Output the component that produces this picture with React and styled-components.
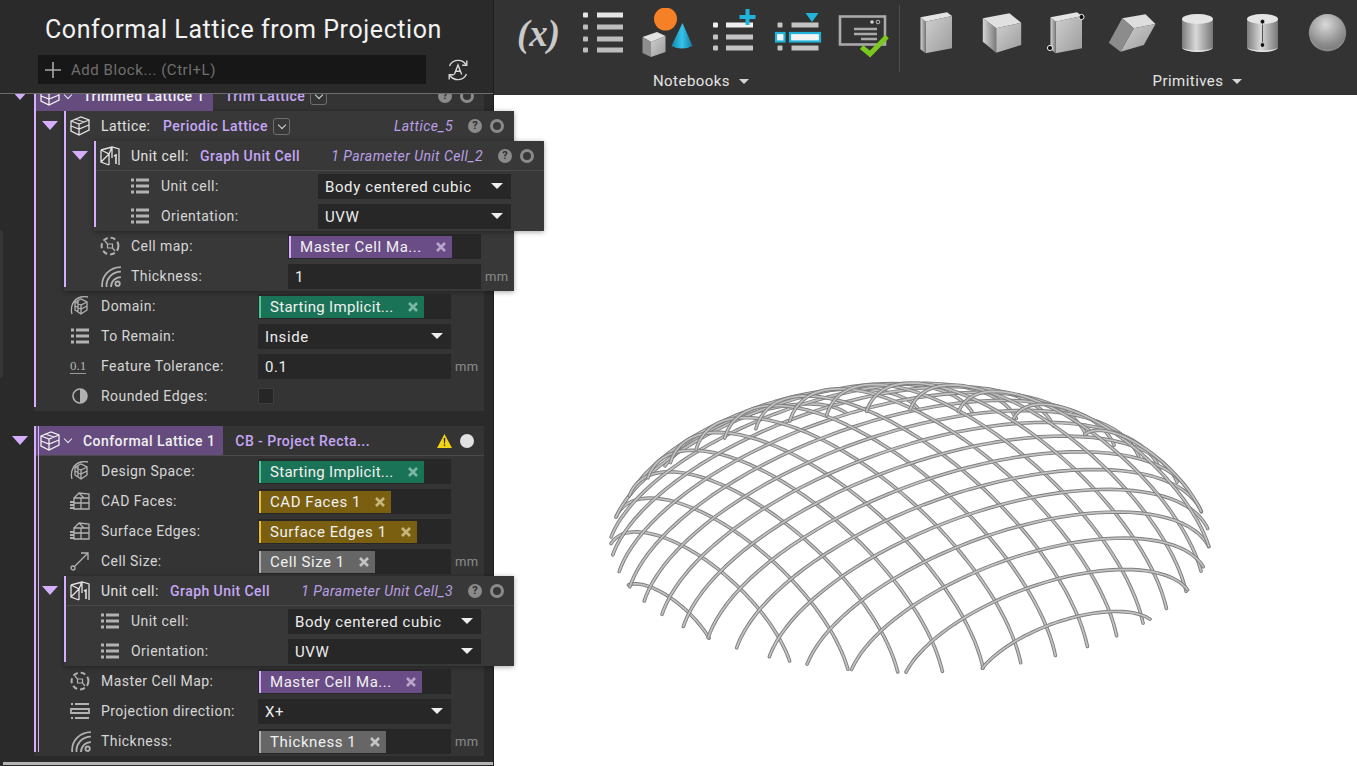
import React from "react";
import styled, { createGlobalStyle } from "styled-components";

const GlobalStyle = createGlobalStyle`
  html, body {
    margin: 0;
    height: 100%;
    overflow: hidden;
    background: #fff;
    font-family: Roboto, "Liberation Sans", sans-serif;
  }
`;

const Page = styled.div`
  display: flex;
  width: 1357px;
  height: 766px;
  overflow: hidden;
  letter-spacing: 0.45px;
`;

const Sidebar = styled.aside`
  position: relative;
  z-index: 2;
  flex: 0 0 494px;
  box-sizing: border-box;
  height: 766px;
  background: #2a2a2a;
  border-right: 1px solid #1e1e1e;
`;

const SideHeader = styled.header`
  position: relative;
  z-index: 3;
  box-sizing: border-box;
  height: 94px;
  padding-top: 15px;
  background: #2a2a2a;
  border-bottom: 1px solid #6c6c6c;
`;

const Title = styled.h1`
  margin: 0 0 10px 45px;
  font-size: 25px;
  font-weight: 400;
  line-height: 30px;
  letter-spacing: 0.58px;
  color: #f2f2f2;
`;

const SearchRow = styled.div`
  display: flex;
  align-items: center;
  gap: 20px;
  margin-left: 38px;
`;

const SearchBox = styled.div`
  display: flex;
  align-items: center;
  gap: 10px;
  box-sizing: border-box;
  width: 388px;
  height: 29px;
  padding-left: 7px;
  background: #171717;
  font-size: 15px;
  letter-spacing: 0.55px;
  color: #6f6f6f;
`;

const ScrollGutter = styled.div`
  position: absolute;
  left: 0;
  top: 230px;
  width: 3px;
  height: 148px;
  background: #363636;
  border-radius: 0 3px 3px 0;
`;

const BlockList = styled.div`
  display: flex;
  flex-direction: column;
  gap: 15px;
  margin-top: -13px;
  padding-left: 34px;
`;

const Block = styled.section`
  position: relative;
  width: 450px;
  margin-left: ${(p) => (p.$nested ? "30px" : "0")};
  background: ${(p) => (p.$nested ? "#383838" : "#343434")};
  box-shadow: ${(p) => (p.$nested ? "0 1px 5px rgba(0, 0, 0, 0.35)" : "none")};

  &::before {
    content: "";
    position: absolute;
    z-index: 2;
    left: 0;
    top: 0;
    bottom: 4px;
    width: 2px;
    background: #d5aefc;
  }

  &::after {
    content: "";
    display: ${(p) => (p.$double ? "block" : "none")};
    position: absolute;
    z-index: 2;
    left: 4px;
    top: 0;
    bottom: 4px;
    width: 1px;
    background: #d5aefc;
  }
`;

const Caret = styled.span`
  position: absolute;
  left: -22px;
  top: 10px;
  width: 0;
  height: 0;
  border-left: 8px solid transparent;
  border-right: 8px solid transparent;
  border-top: 9px solid #d5aefc;
`;

const BlockHeader = styled.div`
  position: relative;
  z-index: 1;
  display: flex;
  align-items: center;
  box-sizing: border-box;
  height: 30px;
  padding-left: 6px;
  padding-right: 10px;
  font-size: 14px;
  color: #e2e2e2;
  border-bottom: ${(p) => (p.$rule ? "1px solid #4a4a4a" : "none")};
`;

const HeaderTag = styled.div`
  display: flex;
  align-items: center;
  align-self: stretch;
  margin-left: -6px;
  padding: 0 8px 0 6px;
  background: #654b7e;
  color: #f0f0f0;
  font-weight: 500;
  white-space: nowrap;
`;

const TagChevron = styled.span`
  width: 5px;
  height: 5px;
  margin: -3px 12px 0 5px;
  border-right: 1.6px solid #e6e6e6;
  border-bottom: 1.6px solid #e6e6e6;
  transform: rotate(45deg);
`;

const BlockLabel = styled.span`
  flex: 0 0 ${(p) => p.$width}px;
  margin-left: 11px;
  white-space: nowrap;
`;

const BlockType = styled.span`
  margin-left: ${(p) => p.$gap || 0}px;
  color: #c6a6f6;
  font-weight: 500;
  white-space: nowrap;
`;

const TypeMenu = styled.span`
  display: inline-flex;
  align-items: center;
  justify-content: center;
  box-sizing: border-box;
  width: 17px;
  height: 17px;
  margin-left: 5px;
  border: 1px solid #6e6e6e;
  border-radius: 3px;

  &::after {
    content: "";
    width: 5px;
    height: 5px;
    margin-top: -3px;
    border-right: 1.5px solid #d8d8d8;
    border-bottom: 1.5px solid #d8d8d8;
    transform: rotate(45deg);
  }
`;

const BlockName = styled.span`
  margin-left: auto;
  color: #bb9fe6;
  font-style: italic;
  white-space: nowrap;
`;

const StatusGroup = styled.div`
  display: flex;
  align-items: center;
  gap: 8px;
  margin-left: ${(p) => (p.$push ? "auto" : "15px")};
`;

const HelpDot = styled.span`
  width: 14px;
  height: 14px;
  border-radius: 50%;
  background: #8a8a8a;
  color: #2e2e2e;
  font-size: 11px;
  font-weight: 700;
  line-height: 14px;
  letter-spacing: 0;
  text-align: center;
`;

const StateDot = styled.span`
  box-sizing: border-box;
  width: 14px;
  height: 14px;
  border-radius: 50%;
  border: ${(p) => (p.$on ? "none" : "3px solid #8a8a8a")};
  background: ${(p) => (p.$on ? "#e2e2e2" : "transparent")};
`;

const FieldRow = styled.div`
  display: grid;
  grid-template-columns: 30px 157px 193px auto;
  align-items: center;
  box-sizing: border-box;
  height: 30px;
  padding-left: 37px;
`;

const FieldIcon = styled.span`
  display: flex;
  align-items: center;
  margin-left: -1px;
  color: #b2b2b2;
`;

const FieldLabel = styled.span`
  font-size: 14px;
  color: #d6d6d6;
  white-space: nowrap;
`;

const Control = styled.div`
  position: relative;
  display: flex;
  align-items: center;
  box-sizing: border-box;
  height: 25px;
  padding-left: ${(p) => (p.$chip ? "1px" : "7px")};
  padding-top: 1px;
  background: #272727;
  font-size: 15px;
  letter-spacing: 0.6px;
  color: #ededed;
  white-space: nowrap;
`;

const SelectArrow = styled.span`
  position: absolute;
  right: 8px;
  top: 9px;
  width: 0;
  height: 0;
  border-left: 6px solid transparent;
  border-right: 6px solid transparent;
  border-top: 6px solid #eeeeee;
`;

const chipColors = {
  green: { bg: "#1a7357", edge: "#4fc79b", x: "#78b8a2" },
  gold: { bg: "#7a5f10", edge: "#e9bd34", x: "#c7b67d" },
  grey: { bg: "#666666", edge: "#b0b0b0", x: "#c4c4c4" },
  purple: { bg: "#6a4c86", edge: "#d5aefc", x: "#b8a6ca" },
};

const Chip = styled.span`
  display: flex;
  align-items: center;
  box-sizing: border-box;
  height: 22px;
  padding: 0 6px 0 9px;
  background: ${(p) => chipColors[p.$tone].bg};
  border-left: 2px solid ${(p) => chipColors[p.$tone].edge};
  color: #f1f1f1;
  font-size: 15px;
  letter-spacing: ${(p) => (p.$tight ? "0.3px" : "0.55px")};
`;

const ChipClose = styled.svg`
  width: 10px;
  height: 10px;
  margin-left: 14px;
  color: ${(p) => chipColors[p.$tone].x};
`;

const Unit = styled.span`
  margin-left: 4px;
  font-size: 13px;
  color: #8b8b8b;
`;

const CheckBox = styled.span`
  box-sizing: border-box;
  width: 16px;
  height: 16px;
  background: #262626;
  border: 1px solid #3f3f3f;
`;

const SmallValue = styled.span`
  font-family: "Liberation Serif", serif;
  font-size: 13px;
  line-height: 14px;
  letter-spacing: 0;
  color: #b4b4b4;
  border-bottom: 1px solid #9a9a9a;
`;

const BottomRule = styled.div`
  height: 3px;
  margin: 6px 0 0 3px;
  background: #b4b4b4;
`;

const Main = styled.main`
  display: flex;
  flex: 1;
  flex-direction: column;
  min-width: 0;
`;

const Toolbar = styled.div`
  display: flex;
  flex: 0 0 95px;
  overflow: hidden;
  background: #333333;
  padding-left: 12px;
`;

const ToolGroup = styled.div`
  flex: 0 0 ${(p) => p.$width}px;
  padding-top: 8px;
`;

const ToolIcons = styled.div`
  display: flex;
`;

const ToolSlot = styled.div`
  display: flex;
  align-items: center;
  justify-content: center;
  flex: 0 0 ${(p) => p.$size}px;
  height: 50px;
`;

const FxGlyph = styled.span`
  font-family: "Liberation Serif", serif;
  font-size: 37px;
  font-style: italic;
  font-weight: 700;
  letter-spacing: 0;
  color: #c9c9c9;
`;

const ToolSeparator = styled.div`
  flex: 0 0 1px;
  height: 67px;
  margin: 5px 3.5px 0 3px;
  background: #4d4d4d;
`;

const GroupLabel = styled.div`
  display: flex;
  align-items: center;
  justify-content: center;
  gap: 9px;
  height: 20px;
  margin-top: 13px;
  font-size: 15px;
  color: #e4e4e4;

  &::after {
    content: "";
    width: 0;
    height: 0;
    border-left: 5px solid transparent;
    border-right: 5px solid transparent;
    border-top: 5px solid #d6d6d6;
  }
`;

const Viewport = styled.div`
  flex: 1;
  min-height: 0;
  background: #ffffff;
`;

const DomeSvg = styled.svg`
  display: block;
  width: 100%;
  height: 100%;
`;

/* ---- small sidebar icons ---- */

const Glyph = ({ size = 20, children, fill = "none", width = 1.3 }) => (
  <svg width={size} height={size} viewBox="0 0 20 20" fill={fill} stroke="currentColor" strokeWidth={width}>
    {children}
  </svg>
);

const LatticeIcon = () => (
  <Glyph>
    <path d="M1 5 11 1 19 4 19 14 9 19 1 15Z M1 5 9 8 19 4 M9 8V19 M1 10 9 13 19 9 M5 3 14 6" />
  </Glyph>
);

const UnitCellIcon = () => (
  <Glyph>
    <path d="M1 4 12 1 19 3V19 M1 4V16L9 19 M1 4 9 8V19 M9 8 12 1 M1 16 9 8 M12 1V12" />
    <path d="M14 10 16 9V18" strokeWidth="1.6" />
  </Glyph>
);

const DomainIcon = () => (
  <Glyph>
    <path d="M5 6 11 3 17 6V14L11 18 5 14Z M5 6 11 9 17 6 M11 9V18 M8 4V17 M5 10 11 13 17 10" />
    <path d="M2 18C0 11 3 3 11 1 14 .5 16 .5 18 1" />
  </Glyph>
);

const ListIcon = () => (
  <Glyph width={2.8}>
    <path d="M6 4H19M6 10H19M6 16H19M1 4H4M1 10H4M1 16H4" />
  </Glyph>
);

const CellMapIcon = () => (
  <Glyph width={2}>
    <circle cx="10" cy="10" r="8.4" strokeDasharray="5 3" />
    <path d="M7.5 8H12.5V12H7.5Z M5 5 7.5 8 M15 15 12.5 12" strokeWidth="1.2" />
  </Glyph>
);

const ThicknessIcon = () => (
  <Glyph size={22} width={1.6}>
    <path d="M2 20C1 10 9 2 19 2 M6 20C5 13 11 6 19 6 M10 20C10 15 14 11 19 11" />
    <circle cx="16" cy="17" r="2" />
  </Glyph>
);

const HalfCircleIcon = () => (
  <Glyph>
    <circle cx="10" cy="10" r="7" strokeWidth="1.6" />
    <path d="M10 3A7 7 0 0 1 10 17Z" fill="currentColor" stroke="none" />
  </Glyph>
);

const FacesIcon = () => (
  <Glyph>
    <path d="M4 7 9 2 19 3V7 M4 7H19V18H4Z M11 7V18 M4 12H19 M9 2 14 7" />
    <path d="M0 11H4M0 14H4M0 17H4" strokeWidth="1.8" />
  </Glyph>
);

const ArrowIcon = () => (
  <Glyph>
    <circle cx="3" cy="17" r="2" />
    <path d="M5 15 18 2 M11 2H18V9" />
  </Glyph>
);

const ProjectionIcon = () => (
  <Glyph width={1.8}>
    <path d="M5 3H19M1 3H3 M1 8H19V12H1Z M5 17H19M1 17H3" />
  </Glyph>
);

const CloseGlyph = ({ tone }) => (
  <ChipClose $tone={tone} viewBox="0 0 10 10" fill="none" stroke="currentColor" strokeWidth="2.6">
    <path d="M1 1 9 9M9 1 1 9" />
  </ChipClose>
);

const PlusIcon = () => (
  <svg width="16" height="16" viewBox="0 0 16 16" stroke="#a8a8a8" strokeWidth="1.6">
    <path d="M8 0V16M0 8H16" />
  </svg>
);

const AutoIcon = () => (
  <svg width="24" height="24" viewBox="0 0 24 24" fill="none" stroke="#d8d8d8" strokeWidth="1.4">
    <path d="M3.5 8A9.5 9.5 0 0 1 20 6.5 M20.5 16A9.5 9.5 0 0 1 4 17.5" />
    <path d="M20.8 2.5V7.2H16.2 M3.2 21.5V16.8H7.8" />
    <path d="M8.3 16.5 12 7 15.7 16.5 M9.6 13.2H14.4" />
  </svg>
);

const WarningIcon = () => (
  <svg width="15" height="14" viewBox="0 0 15 14">
    <path d="M7.5 0 15 14H0Z" fill="#f2d313" />
    <path d="M6.7 4H8.3L8 9.5H7Z M6.8 10.5H8.2V12H6.8Z" fill="#2e2e2e" />
  </svg>
);

/* ---- toolbar icons, drawn on a 65x50 slot ---- */

const ToolSvg = ({ children }) => (
  <svg width="65" height="50" viewBox="0 0 65 50">
    {children}
  </svg>
);

const ToolDefs = () => (
  <svg width="0" height="0" style={{ position: "absolute" }}>
    <defs>
      <linearGradient id="faceFront" x1="0" y1="0" x2="1" y2="1">
        <stop offset="0" stopColor="#cfcfcf" />
        <stop offset="1" stopColor="#9c9c9c" />
      </linearGradient>
      <linearGradient id="faceSide" x1="0" y1="0" x2="1" y2="0">
        <stop offset="0" stopColor="#d4d4d4" />
        <stop offset="1" stopColor="#7c7c7c" />
      </linearGradient>
      <linearGradient id="cylBody" x1="0" y1="0" x2="1" y2="0">
        <stop offset="0" stopColor="#7d7d7d" />
        <stop offset="0.45" stopColor="#d8d8d8" />
        <stop offset="1" stopColor="#777777" />
      </linearGradient>
      <linearGradient id="coneBlue" x1="0" y1="0" x2="1" y2="0">
        <stop offset="0" stopColor="#1587ad" />
        <stop offset="0.5" stopColor="#35c4ec" />
        <stop offset="1" stopColor="#1478a0" />
      </linearGradient>
      <radialGradient id="ballShade" cx="0.45" cy="0.28" r="0.75">
        <stop offset="0" stopColor="#d9d9d9" />
        <stop offset="0.7" stopColor="#8d8d8d" />
        <stop offset="1" stopColor="#777777" />
      </radialGradient>
    </defs>
  </svg>
);

const BULLET_ROWS = [7, 19, 31, 42];

const ListTool = () => (
  <ToolSvg>
    {BULLET_ROWS.map((y, i) => (
      <g key={y} fill={i === 0 ? "#e6e6e6" : "#bdbdbd"}>
        <rect x="12" y={y - 2.5} width="5" height="5" rx="1" />
        <rect x="26" y={y - 2.5} width="26" height="5" />
      </g>
    ))}
  </ToolSvg>
);

const ShapesTool = () => (
  <ToolSvg>
    <circle cx="29.5" cy="11" r="11.5" fill="#f58026" />
    <path d="M46.5 15 56.5 38Q46 43 35.5 38Z" fill="url(#coneBlue)" />
    <path d="M6.5 29 21 24 29.5 28 15 34Z" fill="#e2e2e2" />
    <path d="M15 34 29.5 28V44L15 49Z" fill="url(#faceFront)" />
    <path d="M6.5 29 15 34V49L6.5 45Z" fill="#8e8e8e" />
  </ToolSvg>
);

const PlusListTool = () => (
  <ToolSvg>
    {[17, 29, 40].map((y, i) => (
      <g key={y} fill={i === 0 ? "#efefef" : "#c4c4c4"}>
        <rect x="12" y={y - 2.5} width="5" height="5" rx="1" />
        <rect x="25" y={y - 2.5} width="27" height="5" />
      </g>
    ))}
    <path d="M38.5 9H54.5M46.5 1V17" stroke="#20b4da" strokeWidth="4" />
  </ToolSvg>
);

const SelectListTool = () => (
  <ToolSvg>
    <path d="M39.5 5H52.5L46 14Z" fill="#20b4da" />
    <g fill="#c4c4c4">
      <rect x="11.5" y="14.5" width="5" height="5" rx="1" />
      <rect x="25.5" y="14.5" width="27" height="5" />
      <rect x="11.5" y="37.5" width="5" height="5" rx="1" />
      <rect x="25.5" y="37.5" width="27" height="5" />
    </g>
    <rect x="10" y="25" width="8.5" height="8.5" fill="#f4f4f4" stroke="#20b4da" strokeWidth="2.2" />
    <rect x="24" y="25" width="30" height="8.5" fill="#f4f4f4" stroke="#20b4da" strokeWidth="2.2" />
  </ToolSvg>
);

const CheckTool = () => (
  <ToolSvg>
    <rect x="9" y="8.5" width="45" height="28" fill="none" stroke="#a9a9a9" strokeWidth="2.6" />
    <circle cx="41" cy="14" r="1.8" fill="#d0d0d0" />
    <circle cx="47" cy="14" r="1.8" fill="none" stroke="#c0c0c0" />
    <path d="M23 21H46M23 26H46M30 31H46" stroke="#a9a9a9" strokeWidth="2.4" />
    <path d="M30.5 39 39 46 56 28.5" fill="none" stroke="#7ac720" strokeWidth="5" />
  </ToolSvg>
);

const TallBox = ({ pins }) => (
  <ToolSvg>
    <path d="M16.5 9.3 43 4.3 48 8 21.5 13.7Z" fill="#e3e3e3" />
    <path d="M21.5 13.7 48 8V40.3L21.5 45.3Z" fill="url(#faceFront)" />
    <path d="M16.5 9.3 21.5 13.7V45.3L16.5 41.3Z" fill="url(#faceSide)" />
    {pins && (
      <g fill="#111" stroke="#eee" strokeWidth="1">
        <circle cx="47.5" cy="9" r="2.6" />
        <circle cx="16" cy="40" r="2.6" />
      </g>
    )}
  </ToolSvg>
);

const WideBox = () => (
  <ToolSvg>
    <path d="M13.8 10.3 40.5 5.3 52.2 14.7 27.2 20.3Z" fill="#e0e0e0" />
    <path d="M27.2 20.3 52.2 14.7V37L27.2 44.7Z" fill="url(#faceFront)" />
    <path d="M13.8 10.3 27.2 20.3V44.7L13.8 33.7Z" fill="url(#faceSide)" />
  </ToolSvg>
);

const PrismBox = () => (
  <ToolSvg>
    <path d="M22.2 10.3 45.5 6.3 55.5 16 33.8 20.3Z" fill="#dedede" />
    <path d="M33.8 20.3 55.5 16 43.8 37 20.5 43.7Z" fill="url(#faceFront)" />
    <path d="M22.2 10.3 33.8 20.3 20.5 43.7 8.8 34.7Z" fill="#8c8c8c" />
  </ToolSvg>
);

const Cylinder = ({ pins }) => (
  <ToolSvg>
    <path d="M17 11V39A15.5 5 0 0 0 48 39V11Z" fill="url(#cylBody)" />
    <path d="M17 39A15.5 5 0 0 0 48 39 15.5 3.4 0 0 1 17 39Z" fill="#e6e6e6" />
    <ellipse cx="32.5" cy="11" rx="15.5" ry="5" fill="#e4e4e4" />
    {pins && (
      <g>
        <path d="M32.5 14V37" stroke="#555" strokeWidth="1" />
        <circle cx="32.5" cy="13.7" r="2.4" fill="#111" stroke="#eee" strokeWidth="0.8" />
        <circle cx="32.5" cy="37" r="2.4" fill="#111" stroke="#eee" strokeWidth="0.8" />
      </g>
    )}
  </ToolSvg>
);

const Ball = () => (
  <ToolSvg>
    <circle cx="32.5" cy="24.8" r="18.7" fill="url(#ballShade)" />
    <path d="M15 30A18.7 18.7 0 0 0 50 30 18 16 0 0 1 15 30Z" fill="#c2c2c2" />
  </ToolSvg>
);

/* ---- the dome: a flat grid dropped on an ellipsoid cut just above its equator, then projected ---- */

const DOME = {
  cx: 910,
  cy: 541,
  rim: 299,
  span: 303,
  rise: 130,
  cellU: 38,
  cellV: 35,
  phaseU: 14,
  phaseV: 1.5,
  azimuth: (33.7 * Math.PI) / 180,
  tilt: (26 * Math.PI) / 180,
};

const surface = (r2) => DOME.rise * Math.sqrt(Math.max(0, 1 - r2 / (DOME.span * DOME.span)));

const domePoint = (u, v) => {
  const { cx, cy, rim, azimuth, tilt } = DOME;
  const z = surface(u * u + v * v) - surface(rim * rim);
  const x = cx + Math.cos(azimuth) * u + Math.sin(azimuth) * v;
  const y = cy + Math.sin(tilt) * (-Math.sin(azimuth) * u + Math.cos(azimuth) * v) - Math.cos(tilt) * z;
  return `${x.toFixed(1)} ${y.toFixed(1)}`;
};

const buildDomeLines = () => {
  const { rim, cellU, cellV, phaseU, phaseV } = DOME;
  const lines = [];
  for (let k = -10; k <= 10; k++) {
    [
      [k * cellU + phaseU, (a, b) => domePoint(a, b)],
      [k * cellV + phaseV, (a, b) => domePoint(b, a)],
    ].forEach(([offset, toPoint]) => {
      if (Math.abs(offset) >= rim - 5) return;
      const half = Math.sqrt(rim * rim - offset * offset);
      const points = [];
      // sine spacing keeps the steep ends near the rim smooth
      for (let i = 0; i <= 48; i++) {
        points.push(toPoint(offset, half * Math.sin((Math.PI * (i - 24)) / 48)));
      }
      lines.push(`M${points.join("L")}`);
    });
  }
  return lines;
};

const DOME_LINES = buildDomeLines();

const Dome = () => (
  <DomeSvg viewBox="494 95 863 671" fill="none" strokeLinecap="round" strokeLinejoin="round">
    {DOME_LINES.map((d, i) => (
      <g key={i}>
        <path d={d} stroke="#808080" strokeWidth="3.6" />
        <path d={d} stroke="#c2c2c2" strokeWidth="1.7" />
      </g>
    ))}
  </DomeSvg>
);

/* ---- rows ---- */

const Field = ({ icon, label, unit, children, chip }) => (
  <FieldRow>
    <FieldIcon>{icon}</FieldIcon>
    <FieldLabel>{label}</FieldLabel>
    <Control $chip={chip}>{children}</Control>
    {unit && <Unit>{unit}</Unit>}
  </FieldRow>
);

const ChipField = ({ icon, label, unit, tone, text, tight }) => (
  <Field icon={icon} label={label} unit={unit} chip>
    <Chip $tone={tone} $tight={tight}>
      {text}
      <CloseGlyph tone={tone} />
    </Chip>
  </Field>
);

const SelectField = ({ icon = <ListIcon />, label, value }) => (
  <Field icon={icon} label={label}>
    {value}
    <SelectArrow />
  </Field>
);

const Status = ({ push, on, warn }) => (
  <StatusGroup $push={push}>
    {warn ? <WarningIcon /> : <HelpDot>?</HelpDot>}
    <StateDot $on={on} />
  </StatusGroup>
);

const UnitCellBlock = ({ name }) => (
  <Block $nested>
    <Caret />
    <BlockHeader $rule>
      <UnitCellIcon />
      <BlockLabel $width={69}>Unit cell:</BlockLabel>
      <BlockType>Graph Unit Cell</BlockType>
      <BlockName>{name}</BlockName>
      <Status />
    </BlockHeader>
    <SelectField label="Unit cell:" value="Body centered cubic" />
    <SelectField label="Orientation:" value="UVW" />
  </Block>
);

const TOOL_ICONS = [
  <FxGlyph>(x)</FxGlyph>,
  <ListTool />,
  <ShapesTool />,
  <PlusListTool />,
  <SelectListTool />,
  <CheckTool />,
];

const PRIMITIVES = [
  <TallBox />,
  <WideBox />,
  <TallBox pins />,
  <PrismBox />,
  <Cylinder />,
  <Cylinder pins />,
  <Ball />,
];

const App = () => (
  <>
    <GlobalStyle />
    <ToolDefs />
    <Page>
      <Sidebar>
        <SideHeader>
          <Title>Conformal Lattice from Projection</Title>
          <SearchRow>
            <SearchBox>
              <PlusIcon />
              Add Block... (Ctrl+L)
            </SearchBox>
            <AutoIcon />
          </SearchRow>
        </SideHeader>
        <ScrollGutter />
        <BlockList>
          <Block>
            <Caret />
            <BlockHeader>
              <HeaderTag>
                <LatticeIcon />
                <TagChevron />
                Trimmed Lattice 1
              </HeaderTag>
              <BlockType $gap={12}>Trim Lattice</BlockType>
              <TypeMenu />
              <Status push />
            </BlockHeader>
            <Block $nested>
              <Caret />
              <BlockHeader>
                <LatticeIcon />
                <BlockLabel $width={62}>Lattice:</BlockLabel>
                <BlockType>Periodic Lattice</BlockType>
                <TypeMenu />
                <BlockName>Lattice_5</BlockName>
                <Status />
              </BlockHeader>
              <UnitCellBlock name="1 Parameter Unit Cell_2" />
              <ChipField icon={<CellMapIcon />} label="Cell map:" tone="purple" text="Master Cell Ma..." />
              <Field icon={<ThicknessIcon />} label="Thickness:" unit="mm">
                1
              </Field>
            </Block>
            <ChipField icon={<DomainIcon />} label="Domain:" tone="green" text="Starting Implicit..." tight />
            <SelectField label="To Remain:" value="Inside" />
            <Field icon={<SmallValue>0.1</SmallValue>} label="Feature Tolerance:" unit="mm">
              0.1
            </Field>
            <FieldRow>
              <FieldIcon>
                <HalfCircleIcon />
              </FieldIcon>
              <FieldLabel>Rounded Edges:</FieldLabel>
              <CheckBox />
            </FieldRow>
          </Block>

          <Block $double>
            <Caret />
            <BlockHeader $rule>
              <HeaderTag>
                <LatticeIcon />
                <TagChevron />
                Conformal Lattice 1
              </HeaderTag>
              <BlockType $gap={12}>CB - Project Recta...</BlockType>
              <Status push on warn />
            </BlockHeader>
            <ChipField icon={<DomainIcon />} label="Design Space:" tone="green" text="Starting Implicit..." tight />
            <ChipField icon={<FacesIcon />} label="CAD Faces:" tone="gold" text="CAD Faces 1" />
            <ChipField icon={<FacesIcon />} label="Surface Edges:" tone="gold" text="Surface Edges 1" />
            <ChipField icon={<ArrowIcon />} label="Cell Size:" unit="mm" tone="grey" text="Cell Size 1" />
            <UnitCellBlock name="1 Parameter Unit Cell_3" />
            <ChipField icon={<CellMapIcon />} label="Master Cell Map:" tone="purple" text="Master Cell Ma..." />
            <SelectField icon={<ProjectionIcon />} label="Projection direction:" value="X+" />
            <ChipField icon={<ThicknessIcon />} label="Thickness:" unit="mm" tone="grey" text="Thickness 1" />
          </Block>
        </BlockList>
        <BottomRule />
      </Sidebar>

      <Main>
        <Toolbar>
          <ToolGroup $width={390}>
            <ToolIcons>
              {TOOL_ICONS.map((icon, i) => (
                <ToolSlot key={i} $size={65}>
                  {icon}
                </ToolSlot>
              ))}
            </ToolIcons>
            <GroupLabel>Notebooks</GroupLabel>
          </ToolGroup>
          <ToolSeparator />
          <ToolGroup $width={588}>
            <ToolIcons>
              {PRIMITIVES.map((icon, i) => (
                <ToolSlot key={i} $size={65.3}>
                  {icon}
                </ToolSlot>
              ))}
            </ToolIcons>
            <GroupLabel>Primitives</GroupLabel>
          </ToolGroup>
        </Toolbar>
        <Viewport>
          <Dome />
        </Viewport>
      </Main>
    </Page>
  </>
);

export default App;
